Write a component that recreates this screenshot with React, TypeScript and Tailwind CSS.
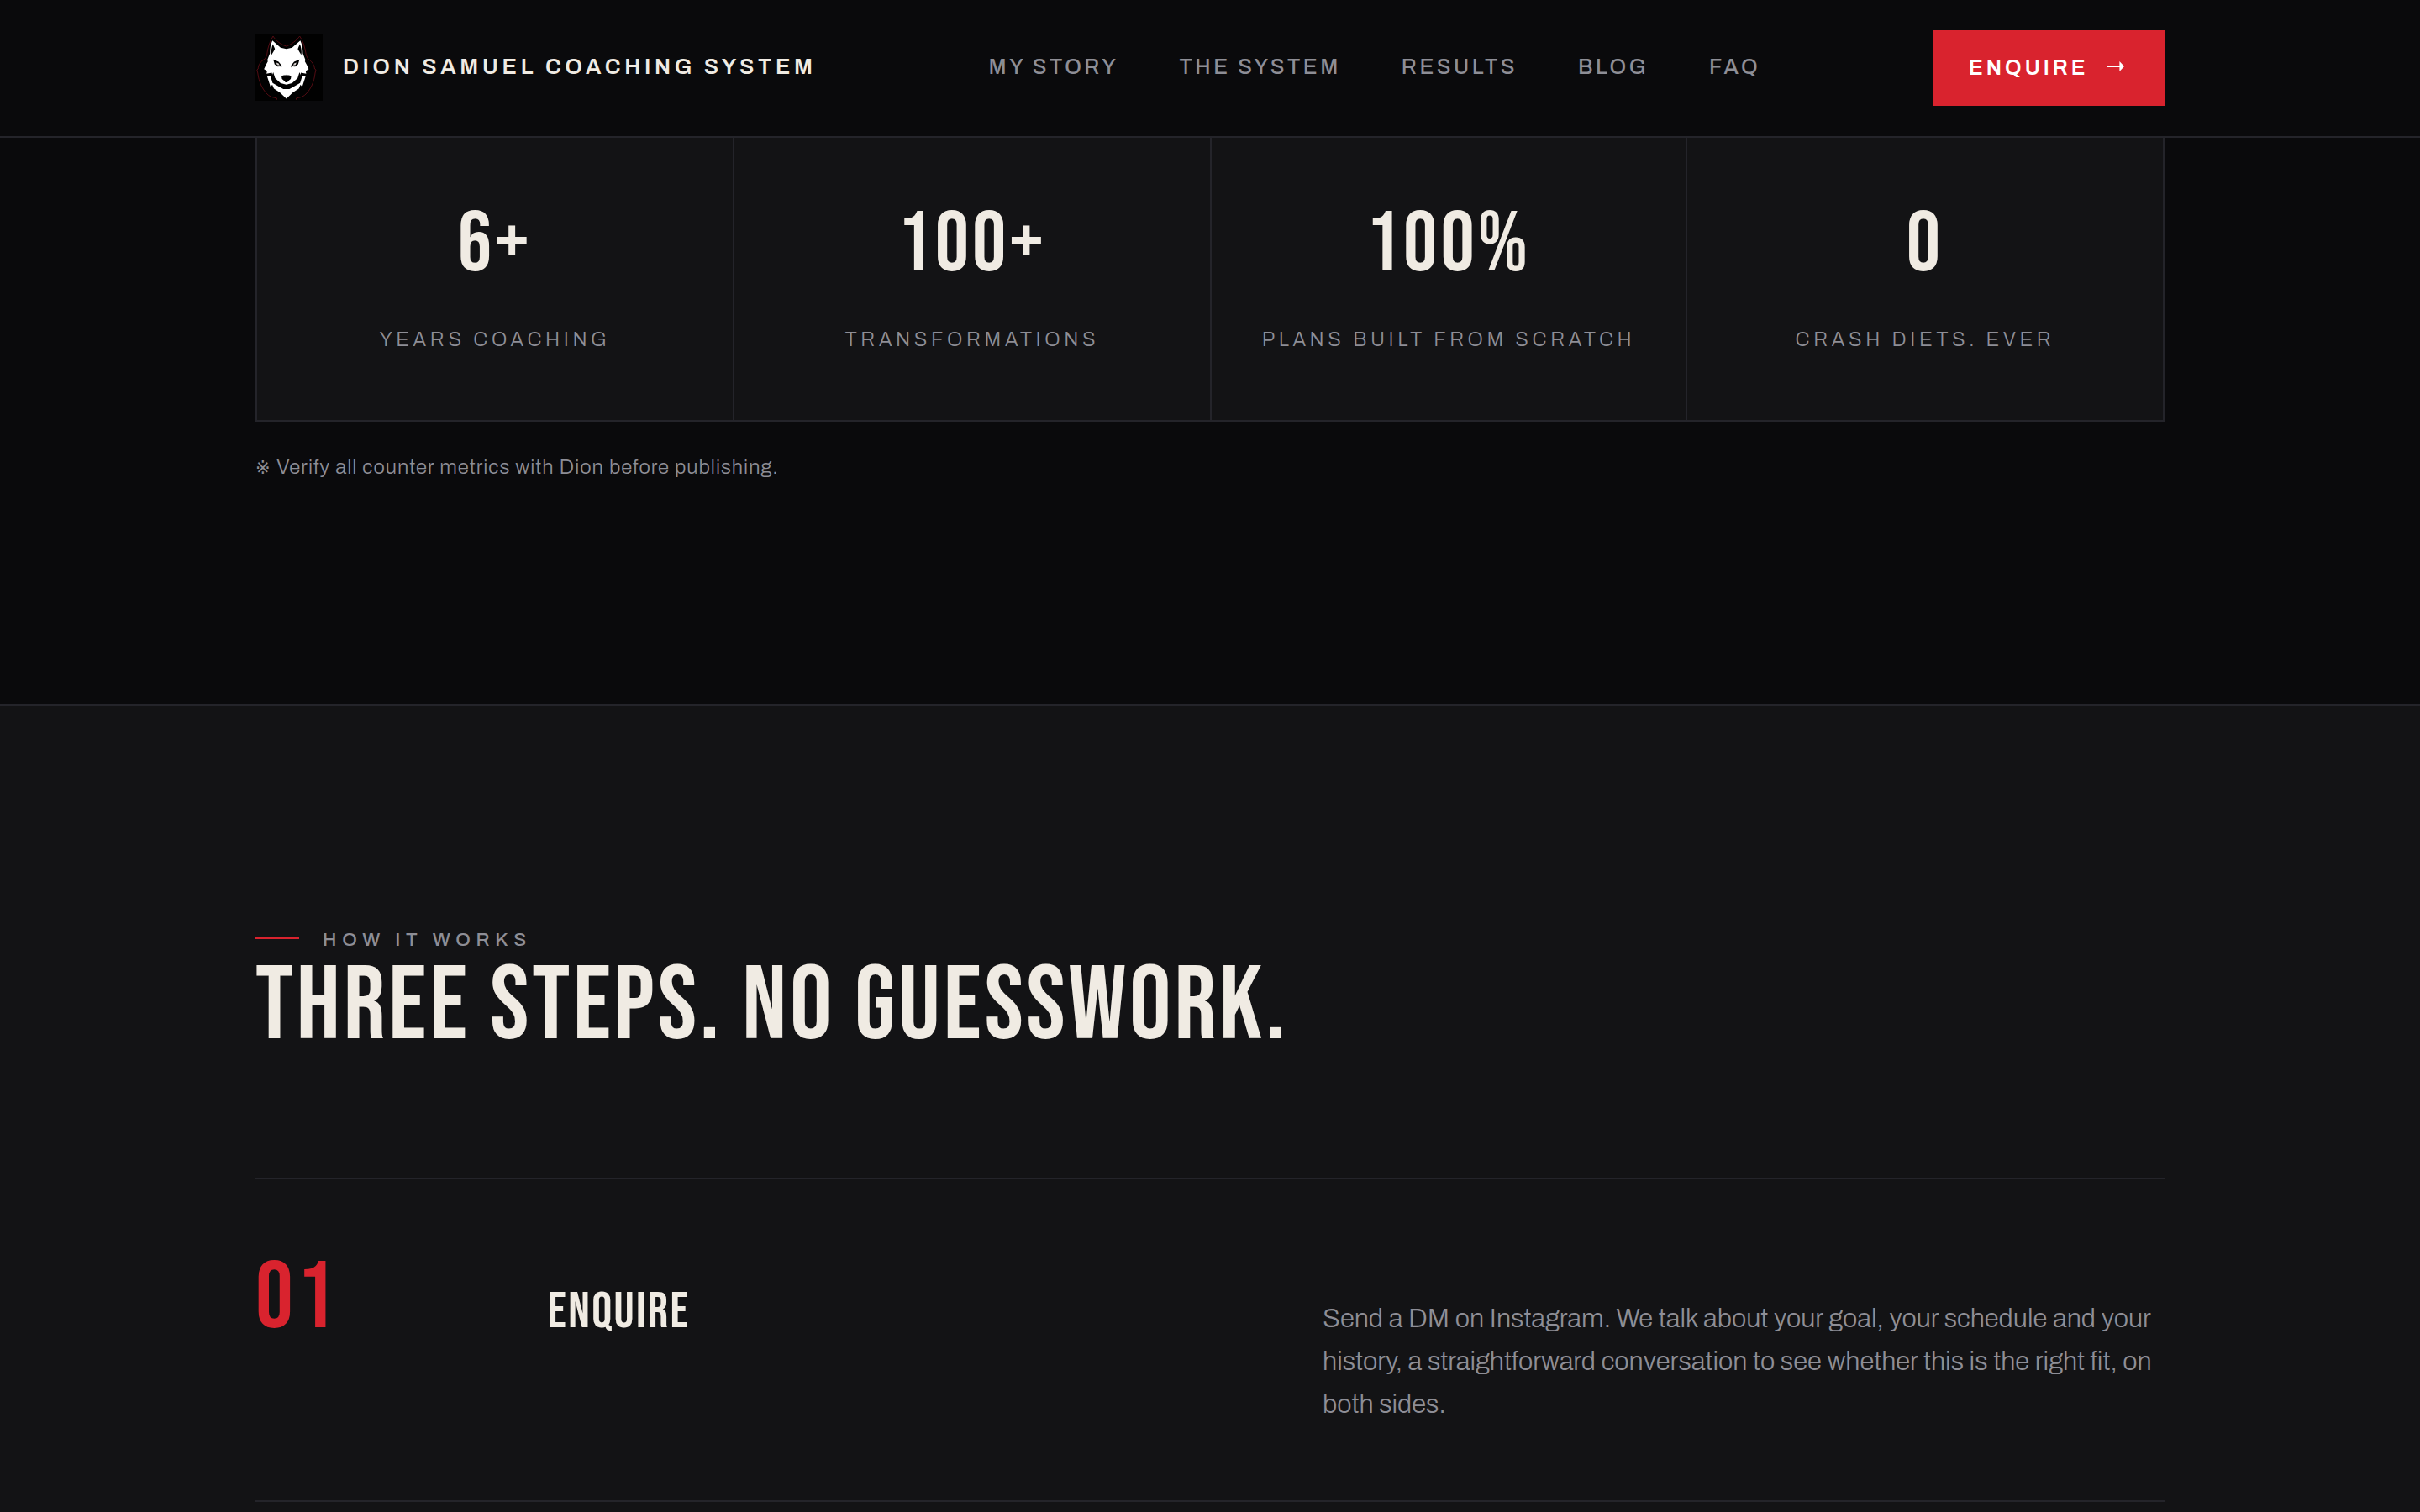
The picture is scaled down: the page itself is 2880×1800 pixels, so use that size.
const navItems = ["My Story", "The System", "Results", "Blog", "FAQ"];

const stats = [
  { value: "6+", label: "Years coaching" },
  { value: "100+", label: "Transformations" },
  { value: "100%", label: "Plans built from scratch" },
  { value: "0", label: "Crash diets. Ever" },
];

const steps = [
  {
    number: "01",
    title: "Enquire",
    text: "Send a DM on Instagram. We talk about your goal, your schedule and your history, a straightforward conversation to see whether this is the right fit, on both sides.",
  },
];

function WolfLogo() {
  return (
    <svg viewBox="0 0 80 80" className="size-20 shrink-0" aria-hidden="true">
      <rect width="80" height="80" fill="#010101" />
      <path
        d="M21 3 C24 8 30 13 36.6 15 C43 13 49 8 52.7 3 C57 9 59 17 60.5 26 L62.5 30 C67 33 70 37 70.5 42 L72 43 L71 47 C70 57 66 66 60 72 C56 76 52 76 48.5 77 L49 79 M21 3 C17 9 14.5 17 13.5 26 L11.5 30 C6 33 3.5 37 3.2 42 L1.8 43 L2.8 47 C4 57 8 66 14 72 C18 76 22 76 25.5 77 L25 79"
        fill="none"
        stroke="#5c0d15"
        strokeWidth="0.9"
      />
      {/* head */}
      <path
        d="M20.2 8.3 L30 16.8 L36.8 18.2 L43.6 16.8 L53.4 8.3 C55.5 13 56.4 18 56.4 23.5 L59.5 31.5 L58.8 33 L61 37 L63.4 42.3 L59.8 44.6 L60.4 47.8 L54.2 46.4 L51.6 54.5 L44.5 61 L40 63 H33.6 L29 61 L22 54.5 L19.4 46.4 L13.2 47.8 L13.8 44.6 L10.2 42.3 L12.6 37 L14.8 33 L14.1 31.5 L17.2 23.5 C17.2 18 18 13 20.2 8.3 Z"
        fill="#ffffff"
      />
      {/* inner ears */}
      <path d="M20.8 12.5 L23.2 18.2 L21.4 21.5 L19 25.5 C18.4 20.5 19.2 16 20.8 12.5 Z" fill="#010101" />
      <path d="M52.8 12.5 L50.4 18.2 L52.2 21.5 L54.6 25.5 C55.2 20.5 54.4 16 52.8 12.5 Z" fill="#010101" />
      {/* eyes */}
      <path d="M21.2 30.8 L27.6 33.6 L31.6 38.6 L30.6 40.6 L29.6 39 L26.4 39.2 L22.8 36.4 Z" fill="#010101" />
      <path d="M52.4 30.8 L46 33.6 L42 38.6 L43 40.6 L44 39 L47.2 39.2 L50.8 36.4 Z" fill="#010101" />
      <path d="M24.8 34.6 L27.6 35.6 L28.8 37.8 L25.8 37.2 Z M48.8 34.6 L46 35.6 L44.8 37.8 L47.8 37.2 Z" fill="#d9d3d0" />
      {/* jaw line and nose */}
      <path
        d="M21.2 46 L23.4 53 L30 59 L36.8 60.8 L43.6 59 L50.2 53 L52.4 46 L54.6 51.5 L52.2 58.5 L44.6 63 L40.4 65.6 H33.2 L29 63 L21.4 58.5 L19 51.5 Z"
        fill="#010101"
      />
      <path d="M31 50.6 Q36.8 47.8 42.6 50.6 L42 54 L39 56.4 L38 58 H35.6 L34.6 56.4 L31.6 54 Z" fill="#010101" />
      <path d="M32.4 50.2 Q36.8 48.4 41.2 50.2" fill="none" stroke="#8d8d8d" strokeWidth="0.6" />
      {/* chest fur */}
      <path
        d="M13.8 50.4 L18 50.8 L20.4 58.8 L28.6 63.4 L33.2 66 H40.4 L45 63.4 L53.2 58.8 L55.6 50.8 L59.8 50.4 L55.6 63.5 L53.6 60.8 L51.6 65.6 L44.6 70 L36.8 77.4 L29 70 L22 65.6 L20 60.8 L18 63.5 Z"
        fill="#ffffff"
      />
    </svg>
  );
}

function ArrowIcon() {
  return (
    <svg viewBox="0 0 20 12" className="h-3 w-5 shrink-0" fill="currentColor" aria-hidden="true">
      <path d="M0 5 H14.4 V0 L20 6 L14.4 12 V7 H0 Z" />
    </svg>
  );
}

function Header() {
  return (
    <header className="flex h-[164px] items-start border-b-2 border-[#24242a] bg-[#0a0a0c]">
      <div className="mx-auto flex h-[162px] w-[2272px] items-start justify-between pt-9">
        <a className="mt-1 flex h-20 items-center gap-6">
          <WolfLogo />
          <span className="text-[26px] leading-[78px] -mt-0.5 font-semibold tracking-[0.18em] whitespace-nowrap text-[#f0ebe3] uppercase">
            Dion Samuel Coaching System
          </span>
        </a>
        <nav className="mt-1 flex h-20 items-center gap-[72px]">
          {navItems.map((item) => (
            <a
              key={item}
              className="text-[25px] leading-[80px] font-medium tracking-[0.14em] whitespace-nowrap text-[#8e8e96] uppercase"
            >
              {item}
            </a>
          ))}
        </nav>
        <a className="flex h-[90px] w-[276px] items-center gap-[22px] bg-[#d9232e] pl-[43px] text-white">
          <span className="-mt-px text-[25px] leading-[89px] font-semibold tracking-[0.16em] uppercase">Enquire</span>
          <span className="-mt-1">
            <ArrowIcon />
          </span>
        </a>
      </div>
    </header>
  );
}

function Stats() {
  return (
    <section className="h-[674px] bg-[#0a0a0c]">
      <div className="mx-auto w-[2272px]">
        <div className="grid h-[338px] grid-cols-[566px_566px_564px_566px] gap-0.5 border-x-2 border-b-2 border-[#24242a] bg-[#24242a]">
          {stats.map((stat) => (
            <div key={stat.label} className="flex flex-col items-center bg-[#131315] pt-[78px] text-center">
              <div className="font-['Bebas_Neue','Roboto_Condensed',sans-serif] text-[100.8px] leading-[100px] tracking-[0.04em] text-[#f0ebe3]">
                {stat.value}
              </div>
              <div className="mt-[45px] text-[23.2px] leading-9 font-light tracking-[0.2em] whitespace-nowrap text-[#8e8e96] uppercase">
                {stat.label}
              </div>
            </div>
          ))}
        </div>
        <p className="mt-[34px] text-2xl leading-10 font-light tracking-[0.04em] text-[#8e8e96]">
          <span className="mr-[0.5px] font-['DejaVu_Sans',sans-serif] text-[21px] leading-none font-normal">※</span> Verify
          all counter metrics with Dion before publishing.
        </p>
      </div>
    </section>
  );
}

function HowItWorks() {
  return (
    <section className="h-[962px] overflow-hidden border-t-2 border-[#24242a] bg-[#131315]">
      <div className="mx-auto w-[2272px] pt-[260px]">
        <div className="flex h-9 items-center gap-7">
          <span className="-mt-0.5 h-0.5 w-[52px] bg-[#d9232e]" />
          <span className="pt-0.5 text-[22.4px] leading-6 font-medium tracking-[0.3em] text-[#8e8e96] uppercase">
            How it works
          </span>
        </div>
        <h2 className="mt-px font-['Bebas_Neue','Roboto_Condensed',sans-serif] text-[124px] leading-[124px] tracking-[0.03em] text-[#f0ebe3] uppercase">
          Three steps. No guesswork.
        </h2>
        <div className="mt-[141px] border-b-2 border-[#24242a]">
          {steps.map((step) => (
            <div
              key={step.number}
              className="grid h-[384px] grid-cols-[284px_858px_1fr] items-baseline gap-16 border-t-2 border-[#24242a] pt-[87px]"
            >
              <div className="font-['Bebas_Neue','Roboto_Condensed',sans-serif] text-[112px] leading-[112px] tracking-[0.04em] text-[#d9232e]">
                {step.number}
              </div>
              <h3 className="font-['Bebas_Neue','Roboto_Condensed',sans-serif] text-[60px] leading-[60px] tracking-[0.04em] text-[#f0ebe3] uppercase">
                {step.title}
              </h3>
              <p className="text-[31px] leading-[51.15px] font-light text-[#8e8e96]">{step.text}</p>
            </div>
          ))}
        </div>
      </div>
    </section>
  );
}

export default function App() {
  return (
    <div className="h-[1800px] w-[2880px] overflow-hidden bg-[#0a0a0c] font-['Archivo','Liberation_Sans',sans-serif]">
      <Header />
      <Stats />
      <HowItWorks />
    </div>
  );
}
